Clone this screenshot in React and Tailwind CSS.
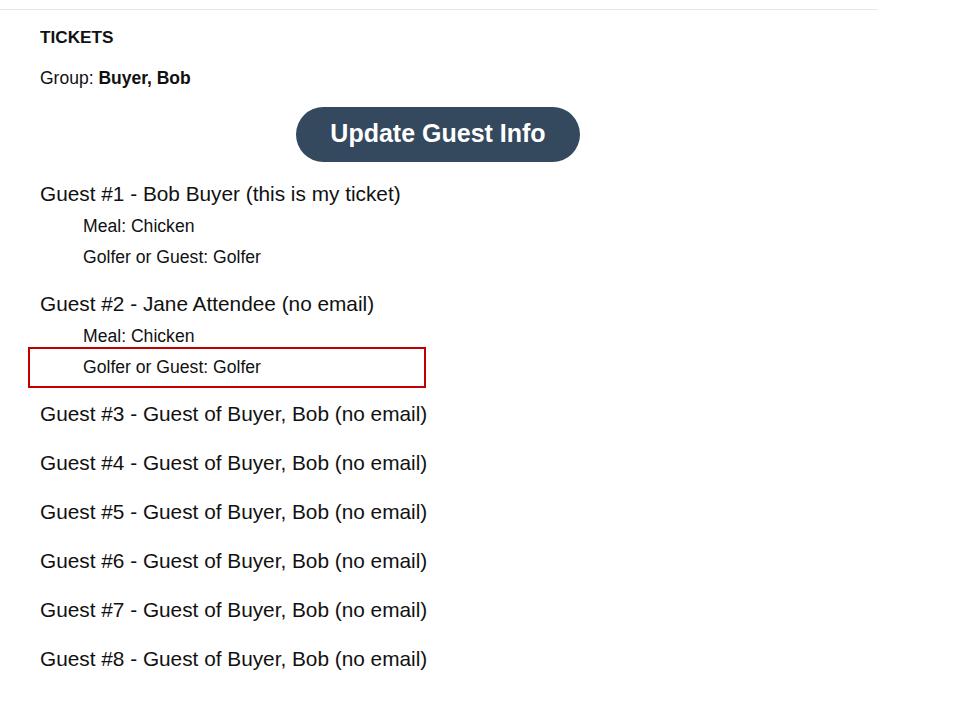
import React from "react";

const guests = [
  { title: "Guest #1 - Bob Buyer (this is my ticket)", subs: ["Meal: Chicken", "Golfer or Guest: Golfer"] },
  { title: "Guest #2 - Jane Attendee (no email)", subs: ["Meal: Chicken", "Golfer or Guest: Golfer"], highlight: 1 },
  { title: "Guest #3 - Guest of Buyer, Bob (no email)", subs: [] },
  { title: "Guest #4 - Guest of Buyer, Bob (no email)", subs: [] },
  { title: "Guest #5 - Guest of Buyer, Bob (no email)", subs: [] },
  { title: "Guest #6 - Guest of Buyer, Bob (no email)", subs: [] },
  { title: "Guest #7 - Guest of Buyer, Bob (no email)", subs: [] },
  { title: "Guest #8 - Guest of Buyer, Bob (no email)", subs: [] },
];

export default function App() {
  return (
    <div className="min-h-[704px] w-[970px] bg-white text-[#111] pt-[9px]" style={{ fontFamily: '"Liberation Sans", Arial, sans-serif' }}>
      <div className="w-[878px] border-t border-[#e8e8e8] px-10 pt-[17px]">
        <div className="text-[17.2px] font-bold leading-[20px]">TICKETS</div>
        <div className="mt-[21px] text-[17.5px] leading-[20px]">
          Group: <span className="font-bold">Buyer, Bob</span>
        </div>
        <div className="mt-[19px] flex justify-center">
          <button className="-ml-[2px] h-[55px] rounded-full bg-[#34495e] px-[34px] pb-[3px] text-[25px] font-bold leading-[52px] text-white">
            Update Guest Info
          </button>
        </div>
        <div className="mt-[15px]">
          {guests.map((g, i) => (
            <div key={i} className="mb-[15px]">
              <div className="text-[20.8px] leading-[34px]">{g.title}</div>
              {g.subs.map((s, j) => (
                <div key={j} className="relative pl-[43px] text-[17.6px] leading-[30.5px]">
                  {s}
                  {g.highlight === j && (
                    <div className="pointer-events-none absolute -left-[12px] -top-[5px] h-[41px] w-[398px] border-2 border-[#c00000]" />
                  )}
                </div>
              ))}
            </div>
          ))}
        </div>
      </div>
    </div>
  );
}
